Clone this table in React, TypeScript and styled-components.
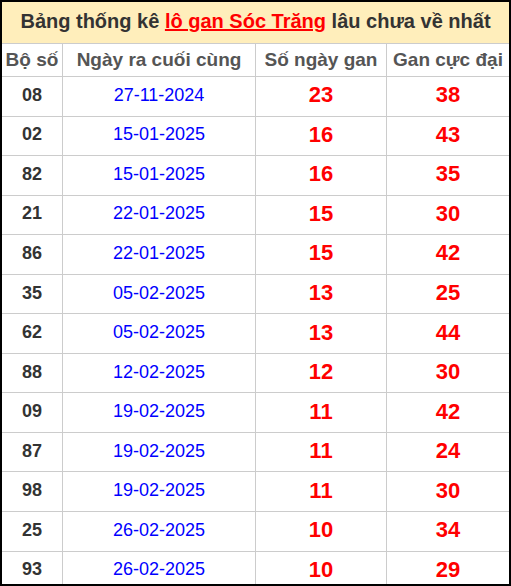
import React from "react";
import styled, { createGlobalStyle } from "styled-components";

const Global = createGlobalStyle`
  html, body { margin: 0; padding: 0; background: #fff; }
  body { font-family: "Liberation Sans", Arial, sans-serif; }
`;

const Frame = styled.div`
  width: 511px;
  height: 586px;
  box-sizing: border-box;
  border: 2px solid #000;
  overflow: hidden;
  background: #ccc;
`;

const Grid = styled.div`
  display: grid;
  grid-template-columns: 60px 192px 130px 122px;
  grid-auto-rows: 38.56px;
  gap: 1px;
  background: #ccc;
  width: 507px;
`;

const Title = styled.div`
  grid-column: 1 / -1;
  height: 41px;
  background: #ffeebb;
  color: #333;
  font-size: 20px;
  font-weight: bold;
  display: flex;
  align-items: center;
  justify-content: center;
  padding-bottom: 2px;
  box-sizing: border-box;
`;

const Link = styled.span`
  color: #f00;
  text-decoration: underline;
`;

const Head = styled.div`
  height: 32px;
  background: #fff;
  color: #555;
  font-size: 19px;
  font-weight: bold;
  display: flex;
  align-items: center;
  justify-content: center;
  white-space: nowrap;
`;

type Kind = "num" | "date" | "red";

const Cell = styled.div<{ $kind: Kind }>`
  background: #fff;
  display: flex;
  align-items: center;
  justify-content: center;
  padding-bottom: 2px;
  box-sizing: border-box;
  color: ${(p) => (p.$kind === "num" ? "#333" : p.$kind === "date" ? "#0000ff" : "#ff0000")};
  font-size: ${(p) => (p.$kind === "red" ? "22px" : "18px")};
  font-weight: ${(p) => (p.$kind === "date" ? "normal" : "bold")};
`;

const rows: [string, string, string, string][] = [
  ["08", "27-11-2024", "23", "38"],
  ["02", "15-01-2025", "16", "43"],
  ["82", "15-01-2025", "16", "35"],
  ["21", "22-01-2025", "15", "30"],
  ["86", "22-01-2025", "15", "42"],
  ["35", "05-02-2025", "13", "25"],
  ["62", "05-02-2025", "13", "44"],
  ["88", "12-02-2025", "12", "30"],
  ["09", "19-02-2025", "11", "42"],
  ["87", "19-02-2025", "11", "24"],
  ["98", "19-02-2025", "11", "30"],
  ["25", "26-02-2025", "10", "34"],
  ["93", "26-02-2025", "10", "29"],
];

export default function App() {
  return (
    <>
      <Global />
      <Frame>
        <Grid style={{ gridTemplateRows: "41px 32px" }}>
          <Title>
            Bảng thống kê&nbsp;<Link>lô gan Sóc Trăng</Link>&nbsp;lâu chưa về nhất
          </Title>
          <Head>Bộ số</Head>
          <Head>Ngày ra cuối cùng</Head>
          <Head>Số ngày gan</Head>
          <Head>Gan cực đại</Head>
          {rows.map((r, i) => (
            <React.Fragment key={i}>
              <Cell $kind="num">{r[0]}</Cell>
              <Cell $kind="date">{r[1]}</Cell>
              <Cell $kind="red">{r[2]}</Cell>
              <Cell $kind="red">{r[3]}</Cell>
            </React.Fragment>
          ))}
        </Grid>
      </Frame>
    </>
  );
}
